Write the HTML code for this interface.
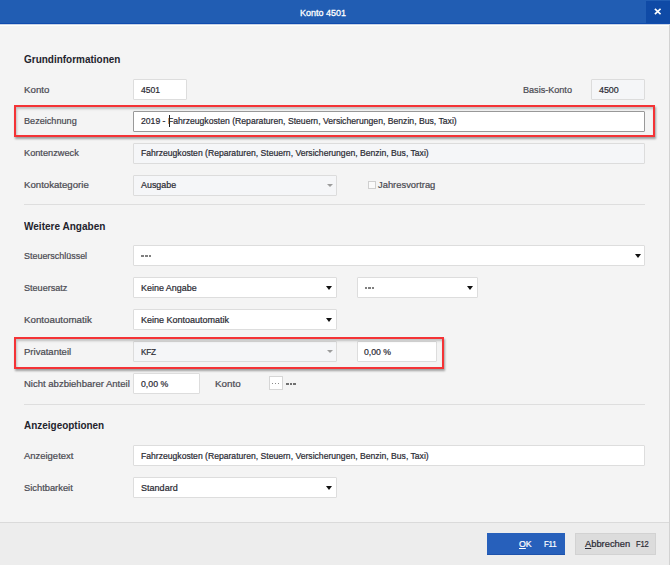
<!DOCTYPE html>
<html><head><meta charset="utf-8">
<style>
*{margin:0;padding:0;box-sizing:border-box}
html,body{width:670px;height:565px;overflow:hidden;background:#f4f4f4;font-family:"Liberation Sans",sans-serif;position:relative}
.a{position:absolute}
.t{position:absolute;white-space:nowrap;line-height:1;transform-origin:0 0;-webkit-text-stroke:0.22px currentColor}
#title{left:0;top:0;width:670px;height:23px;background:#215db3}
#tline{left:0;top:23px;width:670px;height:1px;background:#0f4caf}
#tline2{left:0;top:24px;width:670px;height:1px;background:#c9d3e6}
#tline3{left:0;top:25px;width:670px;height:1px;background:#fdfffb}
#close{left:646px;top:1px;width:24px;height:22px;background:#0f4aa6}
.in{position:absolute;height:21px;background:#fff;border:1px solid #dddddd;border-radius:1px}
.dis{background:#f5f6f8;border-color:#dcdcdc}
.sep{position:absolute;left:24px;width:621px;height:1px;background:#dedede}
.arr{position:absolute;width:0;height:0;border-left:3.5px solid transparent;border-right:3.5px solid transparent;border-top:4px solid #111}
.arr.g{border-top-color:#9c9c9c;border-left-width:3.3px;border-right-width:3.3px;border-top-width:3.3px}
.red{position:absolute;border:2px solid #f43336;box-shadow:1px 2px 2px rgba(0,0,0,.35), inset 1px 2px 2.5px rgba(0,0,0,.22)}
#footer{left:0;top:522px;width:670px;height:43px;background:#ededed;border-top:1px solid #dadada}
#rb{left:669px;top:25px;width:1px;height:540px;background:#d2d2d2}
</style></head><body>
<div class="a" id="title"></div>
<div class="a" id="tline"></div>
<div class="a" id="tline2"></div>
<div class="a" id="tline3"></div>
<div class="a" id="close"></div>
<svg class="a" style="left:653.5px;top:8px" width="7.5" height="7" viewBox="0 0 7.5 7"><path d="M0.9 0.8L6.6 6.2M6.6 0.8L0.9 6.2" stroke="#fff" stroke-width="1.7"/></svg>

<div class="in" style="left:133px;top:79px;width:54px"></div>
<div class="in dis" style="left:591px;top:79px;width:54px"></div>
<div class="in" style="left:133px;top:111px;width:512px;border-color:#999999"></div>
<div class="in dis" style="left:133px;top:143px;width:512px"></div>
<div class="in dis" style="left:133px;top:175px;width:204px"></div>
<div class="arr g" style="left:327px;top:184px"></div>
<div class="a" style="left:368px;top:181px;width:8px;height:8px;border:1px solid #cfcfcf;background:#fafafa"></div>
<div class="sep" style="top:204px"></div>
<div class="in" style="left:133px;top:245px;width:512px"></div>
<div class="arr" style="left:635px;top:254px"></div>
<div class="in" style="left:133px;top:277px;width:204px"></div>
<div class="arr" style="left:326px;top:286px"></div>
<div class="in" style="left:357px;top:277px;width:121px"></div>
<div class="arr" style="left:467px;top:286px"></div>
<div class="in" style="left:133px;top:309px;width:204px"></div>
<div class="arr" style="left:326px;top:318px"></div>
<div class="in dis" style="left:133px;top:341px;width:204px"></div>
<div class="arr g" style="left:327px;top:350px"></div>
<div class="in" style="left:357px;top:341px;width:80px"></div>
<div class="in" style="left:133px;top:373px;width:67px"></div>
<div class="a" style="left:269px;top:376px;width:14px;height:14px;background:#fff;border:1px solid #d6d6d6"></div>
<div class="a" style="left:272.2px;top:383px;width:1.3px;height:1.3px;background:#8a8a8a"></div><div class="a" style="left:275.0px;top:383px;width:1.3px;height:1.3px;background:#8a8a8a"></div><div class="a" style="left:278.0px;top:383px;width:1.3px;height:1.3px;background:#8a8a8a"></div>
<div class="a" style="left:141.4px;top:255.4px;width:2.6px;height:1.2px;background:#808080"></div><div class="a" style="left:145.0px;top:255.4px;width:2.6px;height:1.2px;background:#808080"></div><div class="a" style="left:148.6px;top:255.4px;width:2.6px;height:1.2px;background:#808080"></div>
<div class="a" style="left:364.6px;top:287.4px;width:2.6px;height:1.2px;background:#808080"></div><div class="a" style="left:368.2px;top:287.4px;width:2.6px;height:1.2px;background:#808080"></div><div class="a" style="left:371.8px;top:287.4px;width:2.6px;height:1.2px;background:#808080"></div>
<div class="a" style="left:286.1px;top:383.3px;width:2.5px;height:1.3px;background:#707070"></div><div class="a" style="left:289.7px;top:383.3px;width:2.5px;height:1.3px;background:#707070"></div><div class="a" style="left:293.3px;top:383.3px;width:2.5px;height:1.3px;background:#707070"></div>
<div class="sep" style="top:404px"></div>
<div class="in" style="left:133px;top:445px;width:512px"></div>
<div class="in" style="left:133px;top:477px;width:204px"></div>
<div class="arr" style="left:326px;top:486px"></div>

<div class="a" id="footer"></div>
<div class="a" style="left:487px;top:533px;width:78px;height:22px;background:#2760bb;border-bottom:1px solid #1d52ab"></div>
<div class="a" style="left:575px;top:533px;width:81px;height:22px;background:#dcdcdc;border:1px solid #d2d2d2"></div>

<div class="t" style="left:300.0px;top:9.13px;font-size:9.3px;font-weight:normal;color:#ffffff;letter-spacing:0.000px;transform:scaleX(0.9654);-webkit-text-stroke:0.3px #fff">Konto 4501</div>
<div class="t" style="left:23.6px;top:55.33px;font-size:10.0px;font-weight:bold;color:#23232c;letter-spacing:0.000px;transform:scaleX(0.9972);-webkit-text-stroke:0">Grundinformationen</div>
<div class="t" style="left:24.0px;top:221.84px;font-size:10.0px;font-weight:bold;color:#23232c;letter-spacing:0.000px;transform:scaleX(1.0032);-webkit-text-stroke:0">Weitere Angaben</div>
<div class="t" style="left:24.0px;top:421.24px;font-size:10.0px;font-weight:bold;color:#23232c;letter-spacing:0.000px;transform:scaleX(0.9955);-webkit-text-stroke:0">Anzeigeoptionen</div>
<div class="t" style="left:24.0px;top:84.64px;font-size:9.4px;font-weight:normal;color:#4a4a52;letter-spacing:0.000px;transform:scaleX(1.0359);">Konto</div>
<div class="t" style="left:24.0px;top:116.44px;font-size:9.4px;font-weight:normal;color:#4a4a52;letter-spacing:0.000px;transform:scaleX(0.9726);">Bezeichnung</div>
<div class="t" style="left:24.0px;top:148.04px;font-size:9.4px;font-weight:normal;color:#4a4a52;letter-spacing:0.000px;transform:scaleX(0.9816);">Kontenzweck</div>
<div class="t" style="left:24.0px;top:180.44px;font-size:9.4px;font-weight:normal;color:#4a4a52;letter-spacing:0.000px;transform:scaleX(1.0269);">Kontokategorie</div>
<div class="t" style="left:24.0px;top:251.04px;font-size:9.4px;font-weight:normal;color:#4a4a52;letter-spacing:0.000px;transform:scaleX(0.9536);">Steuerschlüssel</div>
<div class="t" style="left:24.0px;top:283.04px;font-size:9.4px;font-weight:normal;color:#4a4a52;letter-spacing:0.000px;transform:scaleX(0.9665);">Steuersatz</div>
<div class="t" style="left:24.0px;top:315.04px;font-size:9.4px;font-weight:normal;color:#4a4a52;letter-spacing:0.000px;transform:scaleX(1.0403);">Kontoautomatik</div>
<div class="t" style="left:24.0px;top:347.04px;font-size:9.4px;font-weight:normal;color:#4a4a52;letter-spacing:0.000px;transform:scaleX(1.0167);">Privatanteil</div>
<div class="t" style="left:24.0px;top:379.04px;font-size:9.4px;font-weight:normal;color:#4a4a52;letter-spacing:0.000px;transform:scaleX(1.0147);">Nicht abzbiehbarer Anteil</div>
<div class="t" style="left:24.0px;top:451.04px;font-size:9.4px;font-weight:normal;color:#4a4a52;letter-spacing:0.000px;transform:scaleX(1.0073);">Anzeigetext</div>
<div class="t" style="left:24.0px;top:483.04px;font-size:9.4px;font-weight:normal;color:#4a4a52;letter-spacing:0.000px;transform:scaleX(0.9952);">Sichtbarkeit</div>
<div class="t" style="left:523.4px;top:84.64px;font-size:9.4px;font-weight:normal;color:#4a4a52;letter-spacing:0.000px;transform:scaleX(0.9680);">Basis-Konto</div>
<div class="t" style="left:378.4px;top:180.44px;font-size:9.4px;font-weight:normal;color:#4a4a52;letter-spacing:0.000px;transform:scaleX(1.0004);">Jahresvortrag</div>
<div class="t" style="left:214.7px;top:378.64px;font-size:9.4px;font-weight:normal;color:#4a4a52;letter-spacing:0.000px;transform:scaleX(1.0485);">Konto</div>
<div class="t" style="left:141.0px;top:84.64px;font-size:9.4px;font-weight:normal;color:#2a2a33;letter-spacing:0.000px;transform:scaleX(0.9151);">4501</div>
<div class="t" style="left:599.0px;top:84.64px;font-size:9.4px;font-weight:normal;color:#2a2a33;letter-spacing:0.000px;transform:scaleX(0.9449);">4500</div>
<div class="t" style="left:141.0px;top:116.44px;font-size:9.4px;font-weight:normal;color:#2a2a33;letter-spacing:0.000px;transform:scaleX(0.9211);">2019 - Fahrzeugkosten (Reparaturen, Steuern, Versicherungen, Benzin, Bus, Taxi)</div>
<div class="t" style="left:141.0px;top:148.04px;font-size:9.4px;font-weight:normal;color:#2a2a33;letter-spacing:0.000px;transform:scaleX(0.9175);">Fahrzeugkosten (Reparaturen, Steuern, Versicherungen, Benzin, Bus, Taxi)</div>
<div class="t" style="left:141.0px;top:180.44px;font-size:9.4px;font-weight:normal;color:#2a2a33;letter-spacing:0.000px;transform:scaleX(0.9486);">Ausgabe</div>
<div class="t" style="left:141.0px;top:283.04px;font-size:9.4px;font-weight:normal;color:#2a2a33;letter-spacing:0.000px;transform:scaleX(0.9542);">Keine Angabe</div>
<div class="t" style="left:141.0px;top:315.04px;font-size:9.4px;font-weight:normal;color:#2a2a33;letter-spacing:0.000px;transform:scaleX(0.9606);">Keine Kontoautomatik</div>
<div class="t" style="left:141.0px;top:347.04px;font-size:9.4px;font-weight:normal;color:#2a2a33;letter-spacing:-0.250px;transform:scaleX(0.8745);">KFZ</div>
<div class="t" style="left:363.9px;top:347.04px;font-size:9.4px;font-weight:normal;color:#2a2a33;letter-spacing:0.000px;transform:scaleX(0.9284);">0,00 %</div>
<div class="t" style="left:140.7px;top:379.04px;font-size:9.4px;font-weight:normal;color:#2a2a33;letter-spacing:0.000px;transform:scaleX(0.9319);">0,00 %</div>
<div class="t" style="left:141.0px;top:451.04px;font-size:9.4px;font-weight:normal;color:#2a2a33;letter-spacing:0.000px;transform:scaleX(0.9175);">Fahrzeugkosten (Reparaturen, Steuern, Versicherungen, Benzin, Bus, Taxi)</div>
<div class="t" style="left:141.0px;top:483.04px;font-size:9.4px;font-weight:normal;color:#2a2a33;letter-spacing:0.000px;transform:scaleX(0.9649);">Standard</div>
<div class="t" style="left:519.0px;top:539.27px;font-size:9.6px;font-weight:normal;color:#ffffff;letter-spacing:0.000px;transform:scaleX(0.9155);"><u>O</u>K</div>
<div class="t" style="left:544.0px;top:539.27px;font-size:9.6px;font-weight:normal;color:#ffffff;letter-spacing:-0.250px;transform:scaleX(0.8242);">F11</div>
<div class="t" style="left:585.0px;top:539.27px;font-size:9.6px;font-weight:normal;color:#2a2a33;letter-spacing:0.000px;transform:scaleX(0.9725);"><u>A</u>bbrechen</div>
<div class="t" style="left:636.0px;top:539.27px;font-size:9.6px;font-weight:normal;color:#2a2a33;letter-spacing:-0.250px;transform:scaleX(0.7854);">F12</div>
<div class="a" style="left:169px;top:115px;width:1px;height:12px;background:#222"></div>

<div class="red" style="left:14px;top:105px;width:641px;height:32px"></div>
<div class="red" style="left:14px;top:337px;width:430px;height:32px"></div>
<div class="a" id="rb"></div>
</body></html>
